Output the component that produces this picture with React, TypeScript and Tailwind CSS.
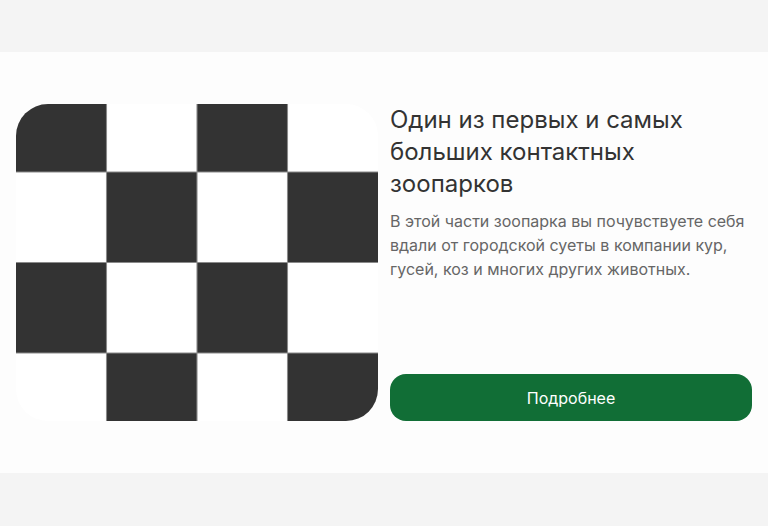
import React from "react";

function Checker() {
  const cells = [];
  for (let r = 0; r < 4; r++) {
    for (let c = 0; c < 4; c++) {
      if ((r + c) % 2 === 0) {
        cells.push(<rect key={`${r}-${c}`} x={c} y={r} width={1} height={1} fill="#333333" />);
      }
    }
  }
  return (
    <svg
      viewBox="0 0 4 4"
      preserveAspectRatio="xMidYMid slice"
      className="h-full w-full"
    >
      <rect x={0} y={0} width={4} height={4} fill="#ffffff" />
      {cells}
      {[1, 2, 3].map((i) => (
        <g key={i} stroke="#8a8a8a" strokeWidth={0.012}>
          <line x1={i} y1={0} x2={i} y2={4} />
          <line x1={0} y1={i} x2={4} y2={i} />
        </g>
      ))}
    </svg>
  );
}

export default function App() {
  return (
    <div
      className="min-h-[526px] w-full bg-[#f4f4f4] py-[52px]"
      style={{ fontFamily: "Inter, 'Noto Sans', sans-serif" }}
    >
      <section className="bg-[#fdfdfd] px-4 py-[52px]">
        <div className="grid grid-cols-2 gap-3">
          <div className="h-[317px] overflow-hidden rounded-[32px]">
            <Checker />
          </div>
          <div className="flex flex-col">
            <h2 className="text-[24px] font-normal leading-[32px] text-[#333333]">
              Один из первых и самых больших контактных зоопарков
            </h2>
            <p className="mt-[9px] text-[16px] leading-6 text-[#666666]">
              В этой части зоопарка вы почувствуете себя вдали от городской
              суеты в компании кур, гусей, коз и многих других животных.
            </p>
            <button className="mt-auto h-[47px] w-full rounded-2xl bg-[#116e36] text-[16px] font-normal text-white">
              Подробнее
            </button>
          </div>
        </div>
      </section>
    </div>
  );
}
